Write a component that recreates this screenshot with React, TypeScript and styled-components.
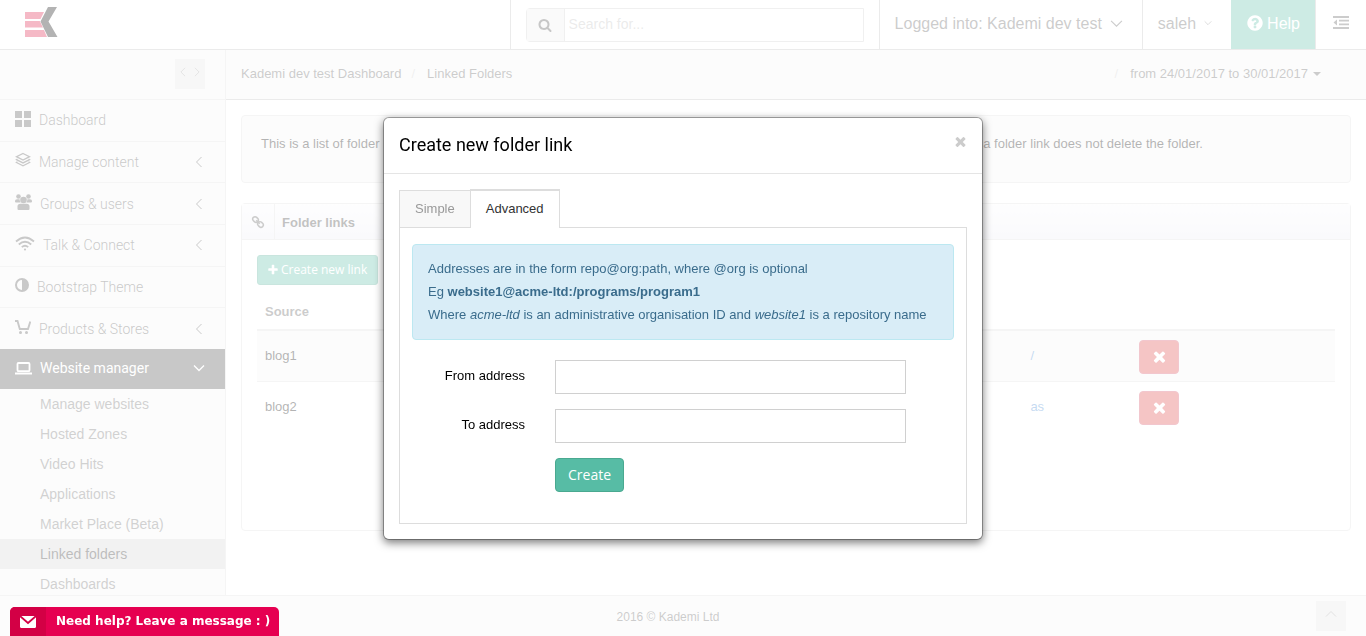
import React from "react";
import styled, { createGlobalStyle, css } from "styled-components";

const sans = `"Liberation Sans", Arial, sans-serif`;
const roboto = `Roboto, "Liberation Sans", sans-serif`;
const openSans = `"Open Sans", "Liberation Sans", sans-serif`;

const GlobalStyle = createGlobalStyle`
  *, *::before, *::after { box-sizing: border-box; }
  html, body, #root { height: 100%; }
  body {
    margin: 0;
    overflow: hidden;
    background: #fff;
    color: #000;
    font: 13px/23px ${sans};
  }
  a { color: inherit; text-decoration: none; }
  button { font: inherit; cursor: pointer; }
  ul { list-style: none; margin: 0; padding: 0; }
  h1, h2, p { margin: 0; }
  svg { display: block; flex: none; }
`;

/* ---------- icons ---------- */

type GlyphProps = { d: string; size: number };
const Glyph = ({ d, size }: GlyphProps) => (
  <svg width={size} height={size} viewBox="0 0 1792 1792" fill="currentColor" aria-hidden="true">
    <path d={d} />
  </svg>
);

const glyphs = {
  search:
    "M1216 832q0-185-131.5-316.5t-316.5-131.5-316.5 131.5-131.5 316.5 131.5 316.5 316.5 131.5 316.5-131.5 131.5-316.5zm512 832q0 52-38 90t-90 38q-54 0-90-38l-343-342q-179 124-399 124-143 0-273.5-55.5t-225-150-150-225-55.5-273.5 55.5-273.5 150-225 225-150 273.5-55.5 273.5 55.5 225 150 150 225 55.5 273.5q0 220-124 399l343 343q37 37 37 90z",
  plus:
    "M1600 736v192q0 40-28 68t-68 28h-416v416q0 40-28 68t-68 28h-192q-40 0-68-28t-28-68v-416h-416q-40 0-68-28t-28-68v-192q0-40 28-68t68-28h416v-416q0-40 28-68t68-28h192q40 0 68 28t28 68v416h416q40 0 68 28t28 68z",
  times:
    "M1490 1322q0 40-28 68l-136 136q-28 28-68 28t-68-28l-294-294-294 294q-28 28-68 28t-68-28l-136-136q-28-28-28-68t28-68l294-294-294-294q-28-28-28-68t28-68l136-136q28-28 68-28t68 28l294 294 294-294q28-28 68-28t68 28l136 136q28 28 28 68t-28 68l-294 294 294 294q28 28 28 68z",
  question:
    "M1024 1376v-192q0-14-9-23t-23-9h-192q-14 0-23 9t-9 23v192q0 14 9 23t23 9h192q14 0 23-9t9-23zm256-672q0-88-55.5-163t-138.5-116-170-41q-243 0-371 213-15 24 8 42l132 100q7 6 19 6 16 0 25-12 53-68 86-92 34-24 86-24 48 0 85.5 26t37.5 59q0 38-20 61t-68 45q-63 28-115.5 86.5t-52.5 125.5v36q0 14 9 23t23 9h192q14 0 23-9t9-23q0-19 21.5-49.5t54.5-49.5q32-18 49-28.5t46-35 44.5-48 28-60.5 12.5-81zm384 192q0 209-103 385.5t-279.5 279.5-385.5 103-385.5-103-279.5-279.5-103-385.5 103-385.5 279.5-279.5 385.5-103 385.5 103 279.5 279.5 103 385.5z",
};

const Logo = () => (
  <svg width="33" height="31" viewBox="0 0 33 31" aria-label="Kademi" role="img">
    <g fill="#de1640">
      <path d="M0 5H19L15.5 12H0Z" />
      <path d="M0 14H14.8L18 20.500H0Z" />
      <path d="M0 23H19L22 30H0Z" />
    </g>
    <path d="M23 0H32L23.500 14.500L32.500 30H23L15.500 14.500Z" fill="#000" />
  </svg>
);

const turns = { left: 90, down: 0, up: 180, right: -90 };
const Chevron = ({ to, size = 12, weight = 1 }: { to: keyof typeof turns; size?: number; weight?: number }) => (
  <svg width={size} height={size} viewBox="0 0 12 12" fill="none" stroke="currentColor" strokeWidth={weight} aria-hidden="true">
    <path d="M1 3.500L6 8.500L11 3.500" transform={`rotate(${turns[to]} 6 6)`} />
  </svg>
);

const GridIcon = () => (
  <svg width="16" height="16" viewBox="0 0 16 16" fill="currentColor" aria-hidden="true">
    <path d="M0 0h7v7H0zM9 0h7v7H9zM0 9h7v7H0zM9 9h7v7H9z" />
  </svg>
);
const LayersIcon = () => (
  <svg width="16" height="16" viewBox="0 0 16 16" fill="none" stroke="currentColor" strokeWidth="1.300" aria-hidden="true">
    <path d="M8 1.500L14.500 4.700L8 8L1.500 4.700Z" />
    <path d="M2.500 7L1.500 7.600L8 10.900L14.500 7.600L13.500 7" />
    <path d="M2.500 9.900L1.500 10.500L8 13.800L14.500 10.500L13.500 9.900" />
  </svg>
);
const GroupIcon = () => (
  <svg width="17" height="16" viewBox="0 0 17 16" fill="currentColor" aria-hidden="true">
    <circle cx="3.500" cy="2.500" r="2.300" />
    <circle cx="13.500" cy="2.500" r="2.300" />
    <path d="M0 7.500V7Q0 5.200 2 5.200H4.600Q4.600 7.200 5.600 8.500H1Q0 8.500 0 7.500Z" />
    <path d="M17 7.500V7Q17 5.200 15 5.200H12.400Q12.400 7.200 11.400 8.500H16Q17 8.500 17 7.500Z" />
    <circle cx="8.500" cy="6" r="3.300" />
    <path d="M2.500 15V12.500Q2.500 9.800 5.500 9.800H11.500Q14.500 9.800 14.500 12.500V15Q14.500 16 13.500 16H3.500Q2.500 16 2.500 15Z" />
  </svg>
);
const WifiIcon = () => (
  <svg width="20" height="16" viewBox="0 0 20 16" fill="none" stroke="currentColor" strokeWidth="1.800" aria-hidden="true">
    <path d="M1 5.500Q10 -2.500 19 5.500" />
    <path d="M3.800 8.500Q10 3 16.200 8.500" />
    <path d="M6.800 11.200Q10 8.300 13.200 11.200" />
    <circle cx="10" cy="13.500" r="1.100" fill="currentColor" stroke="none" />
  </svg>
);
const ContrastIcon = () => (
  <svg width="14" height="14" viewBox="0 0 14 14" aria-hidden="true">
    <circle cx="7" cy="7" r="6" fill="none" stroke="currentColor" strokeWidth="2" />
    <path d="M7 1A6 6 0 0 1 7 13Z" fill="currentColor" />
  </svg>
);
const CartIcon = () => (
  <svg width="16" height="16" viewBox="0 0 16 16" fill="none" stroke="currentColor" strokeWidth="1.900" aria-hidden="true">
    <path d="M0 2H2.500L4.800 10H13L15.300 2.500" />
    <circle cx="5.500" cy="13.500" r="1.500" fill="currentColor" stroke="none" />
    <circle cx="11.500" cy="13.500" r="1.500" fill="currentColor" stroke="none" />
  </svg>
);
const LaptopIcon = () => (
  <svg width="17" height="13" viewBox="0 0 17 13" fill="none" stroke="currentColor" strokeWidth="1.800" aria-hidden="true">
    <rect x="2.500" y="1" width="12" height="8.200" rx="1" />
    <path d="M0 11.500H17" strokeWidth="2" />
  </svg>
);
const OutdentIcon = () => (
  <svg width="16" height="13" viewBox="0 0 16 13" fill="currentColor" aria-hidden="true">
    <path d="M0 0h16v2H0zM6 3.700h10v1.900H6zM6 7.400h10v1.900H6zM0 11h16v2H0zM4 3.500v6L0.500 6.500z" />
  </svg>
);
const ChainIcon = () => (
  <svg width="14" height="14" viewBox="0 0 14 14" fill="none" stroke="currentColor" strokeWidth="1.500" aria-hidden="true">
    <g transform="rotate(45 7 7)">
      <rect x="0.500" y="4.700" width="6" height="4.600" rx="2.300" />
      <rect x="7.500" y="4.700" width="6" height="4.600" rx="2.300" />
      <path d="M4.500 7H9.500" />
    </g>
  </svg>
);
const MailIcon = () => (
  <svg width="16" height="12" viewBox="0 0 16 12" aria-hidden="true">
    <rect width="16" height="12" rx="1.500" fill="#fff" />
    <path d="M0 0L8 7L16 0" fill="none" stroke="#d30045" strokeWidth="1.800" />
  </svg>
);

/* ---------- page frame ---------- */

const Page = styled.div`
  display: flex;
  flex-direction: column;
  height: 100vh;
`;

const Header = styled.header`
  display: flex;
  flex: none;
  height: 50px;
  border-bottom: 1px solid #bbb;
  color: #555;
  font-size: 16px;
`;

const Brand = styled.a`
  flex: 1;
  padding: 7px 25px;
`;

const HeaderCell = styled.div`
  display: flex;
  align-items: center;
  padding: 0 15px;
  border-left: 1px solid #bbb;
`;

const HeaderButton = styled.button<{ $accent?: boolean; $wide?: boolean }>`
  display: flex;
  align-items: center;
  gap: ${(p) => (p.$accent ? 3 : 8)}px;
  padding: 0 ${(p) => (p.$wide ? 19 : 15)}px 3px 15px;
  border: 0;
  border-left: 1px solid #bbb;
  background: none;
  color: inherit;
  ${(p) =>
    p.$accent &&
    css`
      padding-left: 14px;
      background: #57bca5;
      border-color: #57bca5;
      color: #fff;
    `}
`;

const MenuToggle = styled(HeaderButton)`
  padding: 0 17px 4px;
`;

const Search = styled.form`
  display: flex;
  width: 338px;
  height: 34px;
  border: 1px solid #ccc;
  border-radius: 4px 0 0 4px;
`;

const SearchButton = styled.button`
  display: grid;
  place-items: center;
  width: 38px;
  padding: 0;
  border: 0;
  border-right: 1px solid #ccc;
  background: #eee;
  color: #444;
`;

const SearchInput = styled.input`
  flex: 1;
  min-width: 0;
  padding: 0 4px 2px;
  border: 0;
  font: 14px ${sans};
  &::placeholder { color: #bbb; opacity: 1; }
`;

const Middle = styled.div`
  display: flex;
  flex: 1;
  min-height: 0;
`;

/* ---------- sidebar ---------- */

const Sidebar = styled.nav`
  flex: none;
  width: 226px;
  border-right: 1px solid #ddd;
  background: #f5f5f5;
  color: #4a4a4a;
`;

const SidebarTop = styled.div`
  display: flex;
  justify-content: flex-end;
  padding: 9px 20px 10px;
`;

const SidebarToggle = styled.button`
  display: flex;
  align-items: center;
  justify-content: space-between;
  width: 30px;
  height: 30px;
  padding: 0 3px 4px;
  border: 0;
  background: #e4e4e4;
  color: #999;
`;

const MainMenu = styled.ul`
  display: grid;
  grid-auto-rows: 1fr;
  height: 250px;
`;

const MenuLink = styled.a<{ $active?: boolean }>`
  display: flex;
  align-items: center;
  gap: 8px;
  height: 100%;
  padding: 0 20px 0 15px;
  border-top: 1px solid #ddd;
  font: 300 14px ${roboto};
  span { flex: 1; }
  svg:first-child { margin-bottom: 3px; }
  ${(p) =>
    p.$active &&
    css`
      height: 40px;
      padding-bottom: 2px;
      border: 0;
      background: #474747;
      color: #fff;
      font-weight: 400;
      svg:first-child { margin-bottom: 0; }
    `}
`;

const SubLink = styled.a<{ $active?: boolean }>`
  display: block;
  padding-left: 40px;
  font-size: 14px;
  line-height: 30px;
  color: ${(p) => (p.$active ? "#222" : "#666")};
  background: ${(p) => (p.$active ? "#d4d4d4" : "none")};
`;

/* ---------- main column ---------- */

const Main = styled.main`
  flex: 1;
  min-width: 0;
`;

const Crumbs = styled.div`
  display: flex;
  align-items: center;
  height: 50px;
  padding: 0 45px 2px 15px;
  border-bottom: 1px solid #bbb;
  background: #f5f5f5;
  color: #555;
`;

const Slash = styled.span`
  padding: 0 12px 0 10px;
  color: #ccc;
`;

const RangeButton = styled.button`
  display: flex;
  align-items: center;
  gap: 5px;
  padding: 0;
  border: 0;
  background: none;
  color: inherit;
  &::after {
    content: "";
    border: 4px solid transparent;
    border-top-color: currentColor;
    border-bottom: 0;
  }
`;

const Spacer = styled.div`
  flex: 1;
`;

const Content = styled.div`
  display: grid;
  gap: 20px;
  padding: 15px;
`;

const Well = styled.div`
  min-height: 68px;
  padding: 16px 19px;
  border: 1px solid #ddd;
  border-radius: 4px;
  background: #f5f5f5;
`;

const WellText = styled.p`
  display: flex;
  justify-content: space-between;
  max-width: 942px;
  white-space: nowrap;
`;

const Panel = styled.section`
  min-height: 328px;
  border: 1px solid #ddd;
  border-radius: 4px;
`;

const PanelHeading = styled.header`
  display: flex;
  align-items: center;
  gap: 7px;
  height: 36px;
  border-bottom: 1px solid #ddd;
  background: linear-gradient(#fafafc, #ededf5);
  color: #333;
`;

const PanelIcon = styled.span`
  display: grid;
  place-items: center;
  width: 33px;
  height: 100%;
  border-right: 1px solid #ddd;
  color: #555;
`;

const PanelTitle = styled.h2`
  padding-top: 1px;
  font-size: 13px;
`;

const PanelBody = styled.div`
  padding: 15px;
`;

const CreateLink = styled.button`
  display: flex;
  align-items: center;
  gap: 2px;
  height: 30px;
  padding: 0 10px 1px 9px;
  border: 1px solid #4aa990;
  border-radius: 3px;
  background: #57bca5;
  color: #fff;
  font: 12px ${openSans};
`;

const LinksTable = styled.table`
  width: 100%;
  margin-top: 7px;
  border-collapse: collapse;
  table-layout: fixed;
  th {
    width: 10%;
    padding: 8px 8px 6px;
    border-bottom: 2px solid #ddd;
    text-align: left;
    color: #555;
  }
  th:first-child { width: 71%; }
  th:last-child { width: 19%; }
  td {
    height: 51px;
    padding: 7px 8px 9px;
    vertical-align: middle;
  }
  td:last-child { padding: 9px 9px 7px; }
  tbody tr:first-child { border-bottom: 1px solid #ddd; background: #f6f6f6; }
  a { color: #3d85d0; }
`;

const DeleteButton = styled.button`
  display: grid;
  place-items: center;
  width: 40px;
  height: 34px;
  padding: 0 0 2px;
  border: 1px solid #d4455a;
  border-radius: 4px;
  background: #de3c3e;
  color: #fff;
`;

const Footer = styled.footer`
  display: flex;
  flex: none;
  align-items: center;
  height: 41px;
  padding: 0 20px;
  border-top: 1px solid #ddd;
  background: #f5f5f5;
  color: #555;
  font-size: 12px;
  p { flex: 1; padding-top: 2px; text-align: center; }
`;

const TopButton = styled.button`
  display: grid;
  place-items: center;
  width: 30px;
  height: 30px;
  padding: 0 0 4px;
  border: 0;
  background: #e4e4e4;
  color: #999;
`;

/* ---------- dialog ---------- */

const Overlay = styled.div`
  position: fixed;
  inset: 0;
  padding-top: 117px;
  background: rgba(255, 255, 255, 0.7);
`;

const Dialog = styled.div`
  width: 100%;
  max-width: 600px;
  margin: 0 auto;
  border: 1px solid rgba(0, 0, 0, 0.3);
  border-radius: 6px;
  background: #fff;
  background-clip: padding-box;
  box-shadow: 0 3px 9px rgba(0, 0, 0, 0.5);
`;

const DialogHeader = styled.header`
  display: flex;
  align-items: center;
  justify-content: space-between;
  height: 56px;
  padding: 0 14px 2px 15px;
  border-bottom: 1px solid #e5e5e5;
  h1 { font: 400 18px ${roboto}; }
`;

const CloseButton = styled.button`
  padding: 0 0 6px;
  border: 0;
  background: none;
  color: #ccc;
`;

const DialogBody = styled.div`
  padding: 15px;
`;

const Tabs = styled.div`
  display: flex;
  align-items: flex-end;
`;

const Tab = styled.button<{ $active?: boolean }>`
  height: 37px;
  padding: 0 15px 2px;
  border: 1px solid #ddd;
  border-width: 1px 0 0 1px;
  background: #f8f8f8;
  color: #999;
  ${(p) =>
    p.$active &&
    css`
      position: relative;
      height: 39px;
      margin-bottom: -1px;
      border-width: 2px 1px 0;
      background: #fff;
      color: #333;
    `}
`;

const TabPanel = styled.div`
  padding: 16px 12px 31px;
  border: 1px solid #ddd;
`;

const Info = styled.div`
  margin-bottom: 20px;
  padding: 12px 15px 13px;
  border: 1px solid #bce8f1;
  border-radius: 4px;
  background: #d9edf7;
  color: #3a6c8c;
`;

const Form = styled.form`
  display: grid;
  gap: 15px;
  margin: 0 -15px;
`;

const Field = styled.div`
  display: grid;
  grid-template-columns: 3fr 8fr 1fr;
  label { padding: 4px 15px; text-align: right; }
`;

const Control = styled.div`
  grid-column: 2;
  padding: 0 15px;
`;

const TextInput = styled.input`
  display: block;
  width: 100%;
  height: 34px;
  padding: 6px 12px;
  border: 1px solid #d0d0d0;
  border-radius: 0;
  font: 14px ${sans};
`;

const SubmitButton = styled.button`
  display: block;
  height: 34px;
  padding: 0 12px 2px;
  border: 1px solid #4aa990;
  border-radius: 4px;
  background: #57bca5;
  color: #fff;
  font: 14px ${openSans};
`;

const Chat = styled.button`
  position: fixed;
  left: 10px;
  bottom: 0;
  display: flex;
  align-items: stretch;
  height: 29px;
  padding: 0;
  overflow: hidden;
  border: 0;
  border-radius: 5px 5px 0 0;
  background: #e60051;
  color: #fff;
  font: bold 12px/29px "DejaVu Sans", Verdana, sans-serif;
  span { padding: 0 9px 0 10px; }
`;

const ChatIcon = styled.i`
  display: grid;
  place-items: center;
  width: 36px;
  background: #d30045;
`;

/* ---------- data ---------- */

const menu = [
  { label: "Dashboard", icon: <GridIcon /> },
  { label: "Manage content", icon: <LayersIcon />, nested: true },
  { label: "Groups & users", icon: <GroupIcon />, nested: true },
  { label: "Talk & Connect", icon: <WifiIcon />, nested: true },
  { label: "Bootstrap Theme", icon: <ContrastIcon /> },
  { label: "Products & Stores", icon: <CartIcon />, nested: true },
];

const subMenu = [
  "Manage websites",
  "Hosted Zones",
  "Video Hits",
  "Applications",
  "Market Place (Beta)",
  "Linked folders",
  "Dashboards",
];

const links = [
  { source: "blog1", path: "/" },
  { source: "blog2", path: "as" },
];

export default function App() {
  return (
    <>
      <GlobalStyle />
      <Page>
        <Header>
          <Brand href="#"><Logo /></Brand>
          <HeaderCell>
            <Search>
              <SearchButton type="button" aria-label="Search"><Glyph d={glyphs.search} size={14} /></SearchButton>
              <SearchInput aria-label="Search for" placeholder="Search for..." />
            </Search>
          </HeaderCell>
          <HeaderButton $wide>Logged into: Kademi dev test <Chevron to="down" size={13} /></HeaderButton>
          <HeaderButton $wide>saleh <Chevron to="down" size={8} /></HeaderButton>
          <HeaderButton $accent><Glyph d={glyphs.question} size={18} /> Help</HeaderButton>
          <MenuToggle aria-label="Toggle menu"><OutdentIcon /></MenuToggle>
        </Header>

        <Middle>
          <Sidebar>
            <SidebarTop>
              <SidebarToggle aria-label="Collapse sidebar">
                <Chevron to="left" size={10} />
                <Chevron to="right" size={10} />
              </SidebarToggle>
            </SidebarTop>
            <MainMenu>
              {menu.map((item) => (
                <li key={item.label}>
                  <MenuLink href="#">
                    {item.icon}
                    <span>{item.label}</span>
                    {item.nested && <Chevron to="left" />}
                  </MenuLink>
                </li>
              ))}
            </MainMenu>
            <MenuLink href="#" $active>
              <LaptopIcon />
              <span>Website manager</span>
              <Chevron to="down" weight={1.3} />
            </MenuLink>
            <ul>
              {subMenu.map((label) => (
                <li key={label}>
                  <SubLink href="#" $active={label === "Linked folders"}>{label}</SubLink>
                </li>
              ))}
            </ul>
          </Sidebar>

          <Main>
            <Crumbs>
              <a href="#">Kademi dev test Dashboard</a>
              <Slash>/</Slash>
              <a href="#">Linked Folders</a>
              <Spacer />
              <Slash>/</Slash>
              <RangeButton>from 24/01/2017 to 30/01/2017</RangeButton>
            </Crumbs>
            <Content>
              <Well>
                <WellText>
                  <span>This is a list of folder</span>
                  <span>a folder link does not delete the folder.</span>
                </WellText>
              </Well>
              <Panel>
                <PanelHeading>
                  <PanelIcon><ChainIcon /></PanelIcon>
                  <PanelTitle>Folder links</PanelTitle>
                </PanelHeading>
                <PanelBody>
                  <CreateLink><Glyph d={glyphs.plus} size={12} /> Create new link</CreateLink>
                  <LinksTable>
                    <thead>
                      <tr><th>Source</th><th /><th /></tr>
                    </thead>
                    <tbody>
                      {links.map((link) => (
                        <tr key={link.source}>
                          <td>{link.source}</td>
                          <td><a href="#">{link.path}</a></td>
                          <td>
                            <DeleteButton aria-label={`Delete ${link.source}`}>
                              <Glyph d={glyphs.times} size={17} />
                            </DeleteButton>
                          </td>
                        </tr>
                      ))}
                    </tbody>
                  </LinksTable>
                </PanelBody>
              </Panel>
            </Content>
          </Main>
        </Middle>

        <Footer>
          <p>2016 © Kademi Ltd</p>
          <TopButton aria-label="Back to top"><Chevron to="up" /></TopButton>
        </Footer>
      </Page>

      <Overlay>
        <Dialog role="dialog" aria-modal="true" aria-labelledby="dialog-title">
          <DialogHeader>
            <h1 id="dialog-title">Create new folder link</h1>
            <CloseButton aria-label="Close"><Glyph d={glyphs.times} size={15} /></CloseButton>
          </DialogHeader>
          <DialogBody>
            <Tabs role="tablist">
              <Tab role="tab" aria-selected={false}>Simple</Tab>
              <Tab role="tab" aria-selected $active>Advanced</Tab>
            </Tabs>
            <TabPanel role="tabpanel">
              <Info>
                <p>Addresses are in the form repo@org:path, where @org is optional</p>
                <p>Eg <b>website1@acme-ltd:/programs/program1</b></p>
                <p>Where <em>acme-ltd</em> is an administrative organisation ID and <em>website1</em> is a repository name</p>
              </Info>
              <Form>
                <Field>
                  <label htmlFor="from">From address</label>
                  <Control><TextInput id="from" /></Control>
                </Field>
                <Field>
                  <label htmlFor="to">To address</label>
                  <Control><TextInput id="to" /></Control>
                </Field>
                <Field>
                  <Control><SubmitButton type="button">Create</SubmitButton></Control>
                </Field>
              </Form>
            </TabPanel>
          </DialogBody>
        </Dialog>
      </Overlay>

      <Chat>
        <ChatIcon><MailIcon /></ChatIcon>
        <span>Need help? Leave a message : )</span>
      </Chat>
    </>
  );
}
